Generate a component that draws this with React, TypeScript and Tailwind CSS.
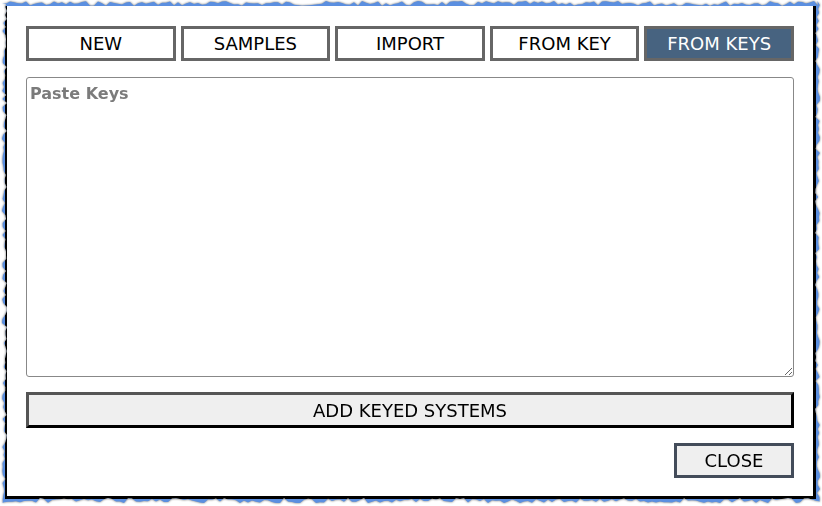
import React, { useMemo } from 'react';

const tabs = ['NEW', 'SAMPLES', 'IMPORT', 'FROM KEY', 'FROM KEYS'];

const font = { fontFamily: '"DejaVu Sans", "Open Sans", sans-serif' };

// jagged "torn paper" outline for the backdrop, seeded so it is stable
function tornPolygon(w: number, h: number) {
  let seed = 7;
  const rnd = () => {
    seed = (seed * 9301 + 49297) % 233280;
    return seed / 233280;
  };
  const pts: string[] = [];
  const step = 4;
  for (let x = 0; x <= w; x += step) pts.push(`${x}px ${(rnd() * 5).toFixed(1)}px`);
  for (let y = 0; y <= h; y += step) pts.push(`${(w - rnd() * 5).toFixed(1)}px ${y}px`);
  for (let x = w; x >= 0; x -= step) pts.push(`${x}px ${(h - rnd() * 5).toFixed(1)}px`);
  for (let y = h; y >= 0; y -= step) pts.push(`${(rnd() * 5).toFixed(1)}px ${y}px`);
  return `polygon(${pts.join(',')})`;
}

export default function App() {
  const active = 'FROM KEYS';
  const clip = useMemo(() => tornPolygon(818, 502), []);

  return (
    <div className="w-[822px] h-[506px] bg-white pt-[1px] pl-[2px] pr-[2px] pb-[3px]" style={font}>
      <div className="relative h-full w-full [filter:drop-shadow(0_0_1px_#6b6b6b)]">
        {/* torn edge backdrop */}
        <div className="h-full w-full bg-[#5b8fe0] pl-[3px] pt-[5px] pr-[4px] pb-[4px]" style={{ clipPath: clip }}>
          <div className="h-full w-full bg-white border-l-[2px] border-r-[3px] border-b-[3px] border-black flex flex-col pl-[19px] pr-[19px] pt-[20px]">
            <div className="grid grid-cols-5 gap-[5px]">
              {tabs.map((t) => (
                <button
                  key={t}
                  className={
                    t === active
                      ? 'h-[35px] border-[3px] border-[#666666] bg-[#476380] text-white text-[18px] leading-none'
                      : 'h-[35px] border-[3px] border-[#666666] bg-white text-black text-[18px] leading-none'
                  }
                >
                  {t}
                </button>
              ))}
            </div>

            <textarea
              placeholder="Paste Keys"
              className="mt-[16px] h-[300px] w-full border border-[#888888] rounded-[3px] px-[3px] py-[4px] text-[16px] font-bold placeholder:text-[#7b7b7b] outline-none resize"
            />

            <button className="mt-[15px] h-[36px] w-full bg-[#efefef] border-[3px] border-t-[#555555] border-l-[#555555] border-r-black border-b-black text-[18px] text-black">
              ADD KEYED SYSTEMS
            </button>

            <div className="flex justify-end mt-[15px]">
              <button className="h-[35px] w-[120px] bg-[#efefef] border-[3px] border-[#434c5a] text-[18px] text-black">
                CLOSE
              </button>
            </div>
          </div>
        </div>
      </div>
    </div>
  );
}
